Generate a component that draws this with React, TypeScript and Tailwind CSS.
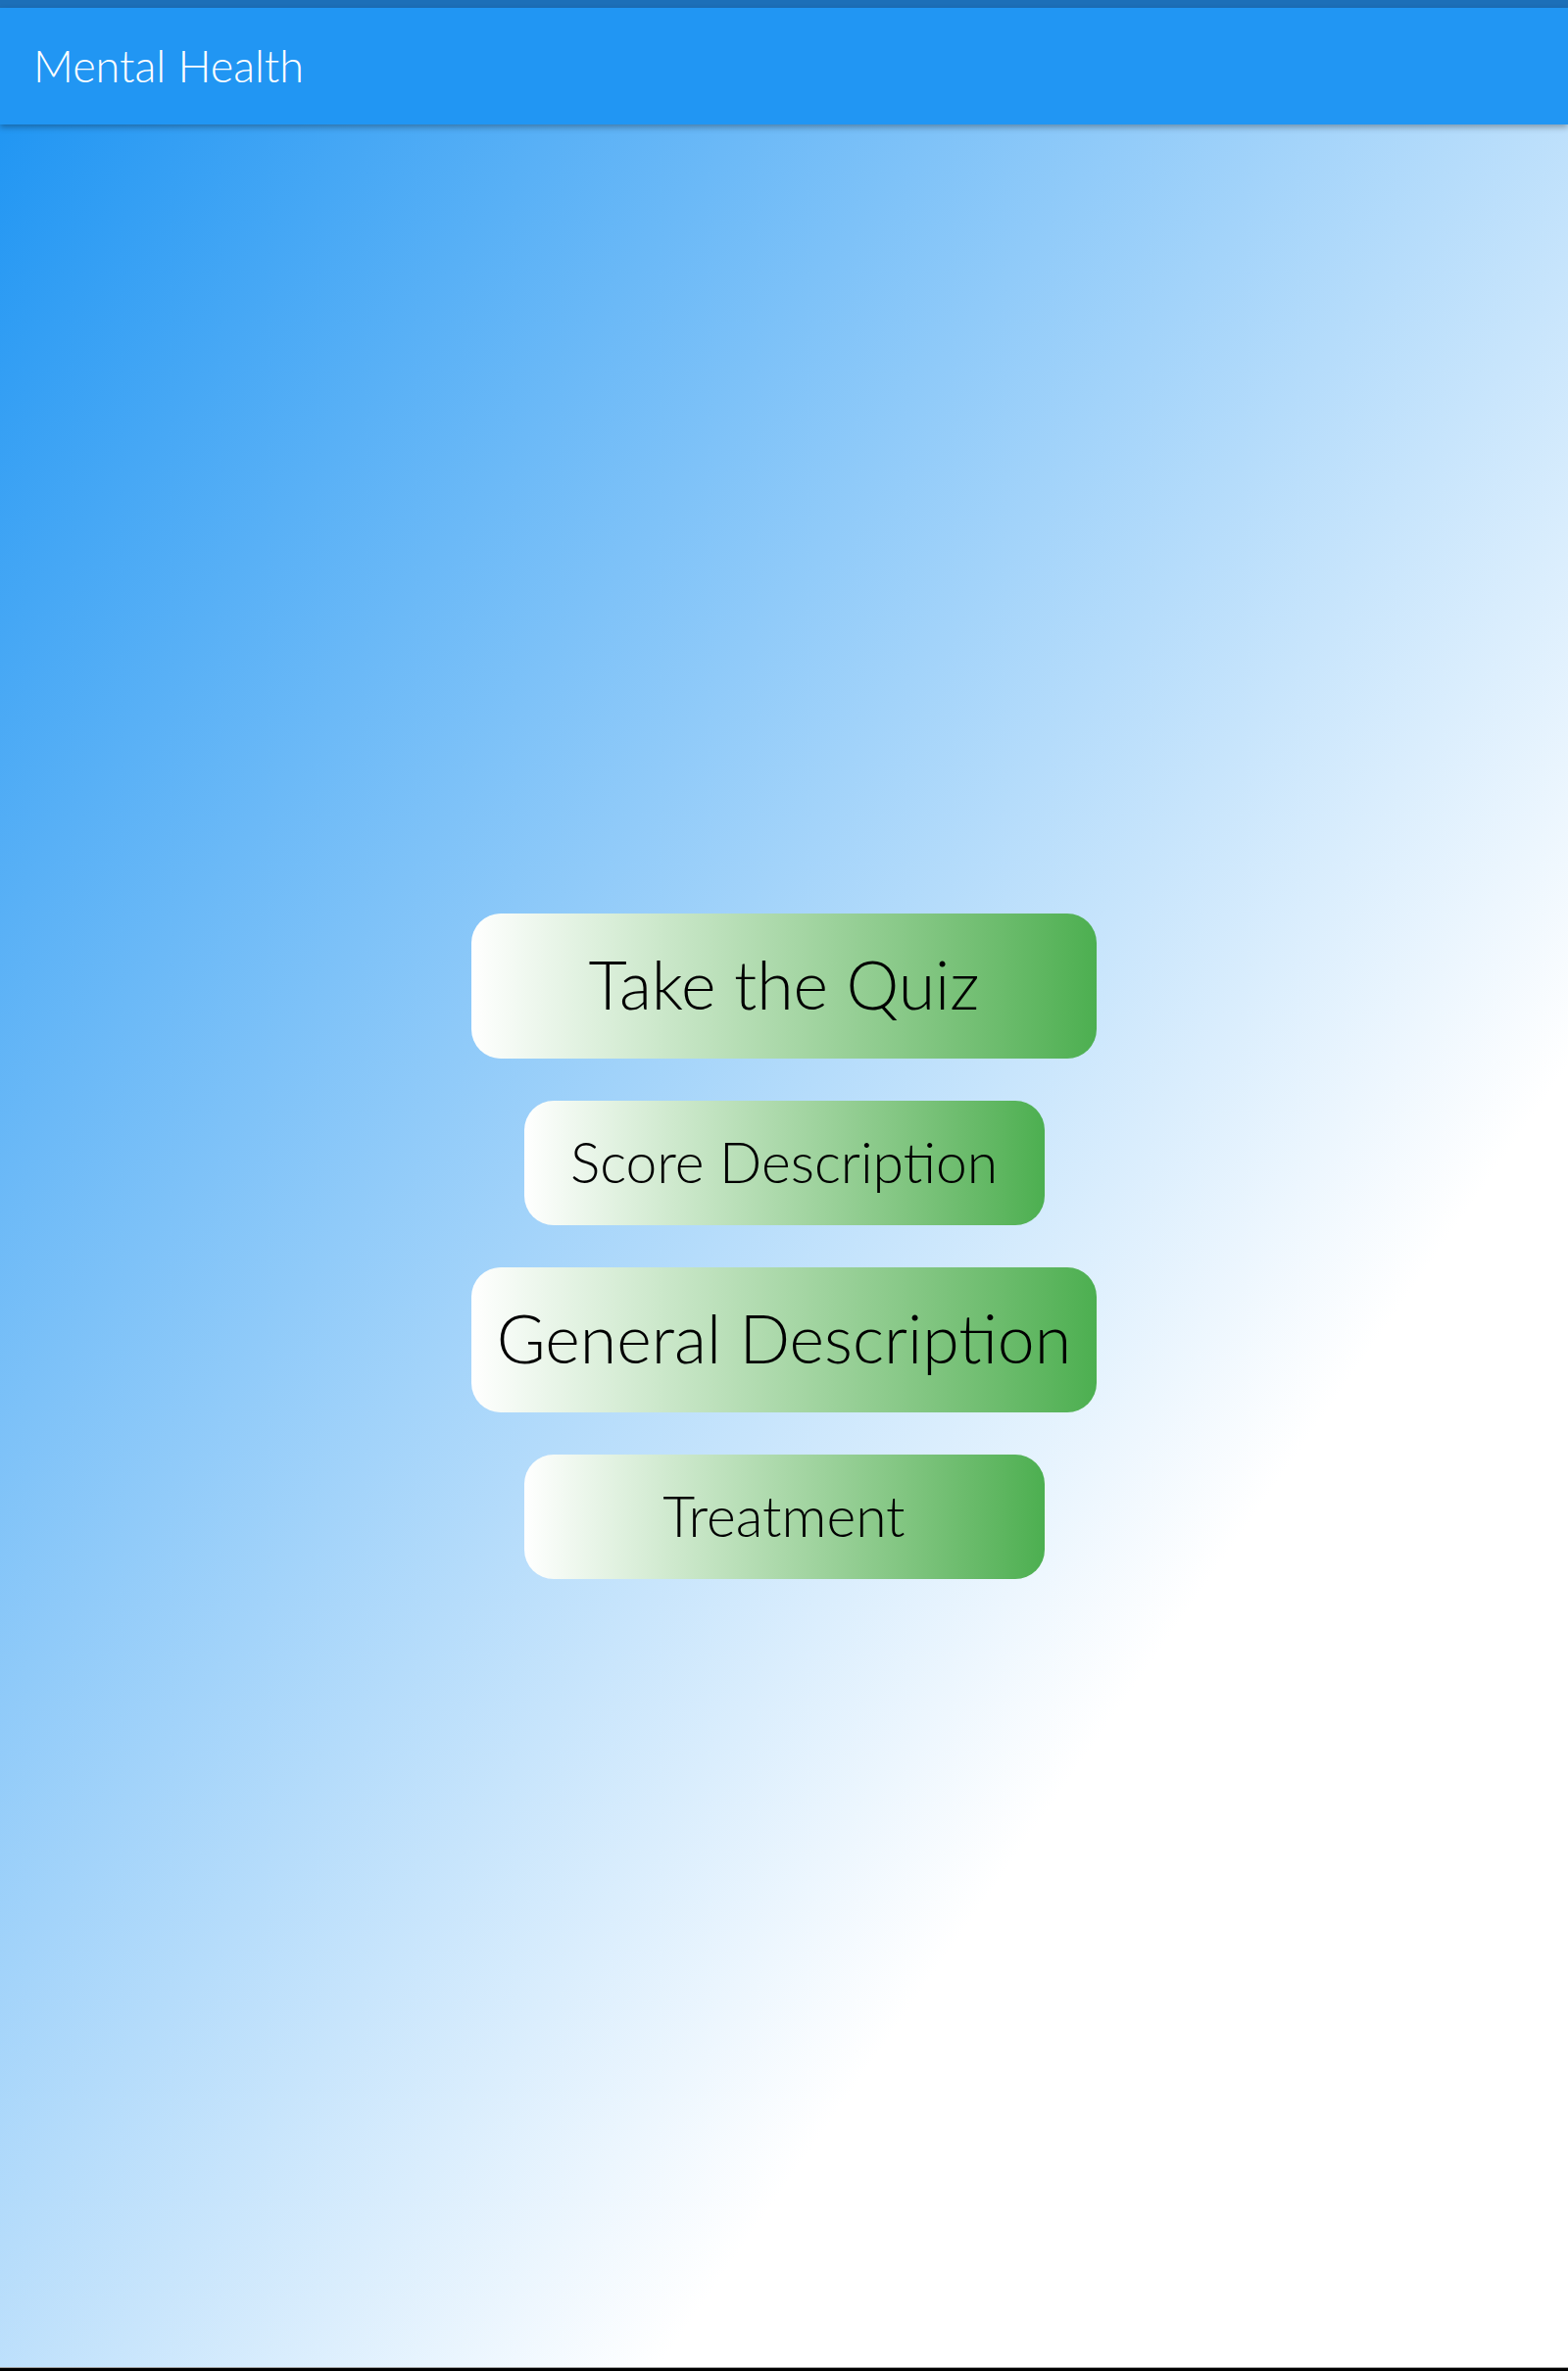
import React from "react";

const font = { fontFamily: "Lato, 'Open Sans', sans-serif" };

function BigButton({ label }: { label: string }) {
  return (
    <button
      className="flex h-[148px] w-[638px] items-center justify-center rounded-[30px] bg-linear-to-r from-white to-[#4caf50] pb-[4px] text-[68px] font-light leading-none text-black"
      style={font}
    >
      {label}
    </button>
  );
}

function SmallButton({ label }: { label: string }) {
  return (
    <button
      className="flex h-[127px] w-[531px] items-center justify-center rounded-[30px] bg-linear-to-r from-white to-[#4caf50] pb-[2px] text-[57px] font-light leading-none text-black"
      style={font}
    >
      {label}
    </button>
  );
}

export default function App() {
  return (
    <div className="flex h-[2419px] w-full flex-col overflow-hidden" style={font}>
      <div className="h-[8px] w-full bg-[#1c6fb8]" />
      <header className="relative z-10 flex h-[119px] w-full items-center bg-[#2196f3] px-[34px] shadow-[0_3px_6px_rgba(0,0,0,0.3)]">
        <h1 className="text-[45px] font-light leading-none text-white">Mental Health</h1>
      </header>
      <main className="flex flex-1 flex-col items-center justify-center gap-[43px] bg-[linear-gradient(to_bottom_right,#2196f3_0%,#ffffff_71%,#ffffff_100%)]">
        <BigButton label="Take the Quiz" />
        <SmallButton label="Score Description" />
        <BigButton label="General Description" />
        <SmallButton label="Treatment" />
      </main>
      <div className="h-[1px] w-full bg-[#9e9e9e]" />
      <div className="h-[3px] w-full bg-black" />
    </div>
  );
}
